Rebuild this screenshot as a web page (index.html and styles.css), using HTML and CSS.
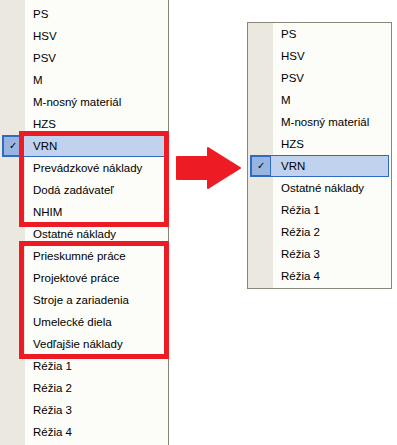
FILE: index.html
```html
<!DOCTYPE html>
<html lang="sk">
<head>
    <meta charset="UTF-8">
    <title>Menu</title>
    <link rel="stylesheet" href="styles.css">
</head>
<body>
    <div class="scene">
        <div class="menu menu-left">
            <div class="item">PS</div>
            <div class="item">HSV</div>
            <div class="item">PSV</div>
            <div class="item">M</div>
            <div class="item">M-nosný materiál</div>
            <div class="item">HZS</div>
            <div class="group">
                <div class="item checked"><span class="check">&#10003;</span>VRN</div>
                <div class="item">Prevádzkové náklady</div>
                <div class="item">Dodá zadávateľ</div>
                <div class="item">NHIM</div>
            </div>
            <div class="item">Ostatné náklady</div>
            <div class="group">
                <div class="item">Prieskumné práce</div>
                <div class="item">Projektové práce</div>
                <div class="item">Stroje a zariadenia</div>
                <div class="item">Umelecké diela</div>
                <div class="item">Vedľajšie náklady</div>
            </div>
            <div class="item">Réžia 1</div>
            <div class="item">Réžia 2</div>
            <div class="item">Réžia 3</div>
            <div class="item">Réžia 4</div>
        </div>

        <div class="arrow">
            <svg width="66" height="42" viewBox="0 0 66 42">
                <path d="M2 10 H33 V1 L65 21 L33 41 V32 H2 Z" fill="#ed1c24" stroke="#ed1c24" stroke-width="2" stroke-linejoin="round"/>
            </svg>
        </div>

        <div class="menu menu-right">
            <div class="item">PS</div>
            <div class="item">HSV</div>
            <div class="item">PSV</div>
            <div class="item">M</div>
            <div class="item">M-nosný materiál</div>
            <div class="item">HZS</div>
            <div class="item checked"><span class="check">&#10003;</span>VRN</div>
            <div class="item">Ostatné náklady</div>
            <div class="item">Réžia 1</div>
            <div class="item">Réžia 2</div>
            <div class="item">Réžia 3</div>
            <div class="item">Réžia 4</div>
        </div>
    </div>
</body>
</html>
```

FILE: styles.css
```css
body {
    margin: 0;
    background: #fff;
    font-family: Tahoma, "Liberation Sans", sans-serif;
    font-size: 11.5px;
    color: #000;
}

.scene {
    display: flex;
    align-items: flex-start;
}

.menu {
    background: #fcfcf9;
    background-image: linear-gradient(to right, #ebe9df 0, #ebe9df 25px, transparent 25px);
    border: 1px solid #8a867a;
}

.menu-left {
    width: 168px;
    border-left: none;
    border-top: none;
    padding-top: 3px;
    padding-bottom: 2px;
}

.menu-right {
    width: 143px;
    margin-top: 22px;
    margin-left: 6px;
    padding: 0 0 1px 0;
}

.item {
    position: relative;
    height: 22px;
    line-height: 22px;
    padding-left: 33px;
    white-space: nowrap;
}

.item.checked {
    background: #c1d2ee;
    outline: 1px solid #316ac5;
    outline-offset: -1px;
    margin: 0 2px 0 2px;
    padding-left: 31px;
}

.check {
    position: absolute;
    left: 1px;
    top: 1px;
    width: 20px;
    height: 20px;
    line-height: 20px;
    text-align: center;
    background: #98b5e2;
    outline: 1px solid #316ac5;
    outline-offset: -1px;
    font-size: 10px;
}

.group {
    position: relative;
}

.group::before {
    content: "";
    position: absolute;
    left: 19px;
    right: -1px;
    top: -4px;
    bottom: -4px;
    border: 5px solid #ed1c24;
    pointer-events: none;
    z-index: 2;
}

.arrow {
    margin-top: 147px;
    margin-left: 6px;
}
```
